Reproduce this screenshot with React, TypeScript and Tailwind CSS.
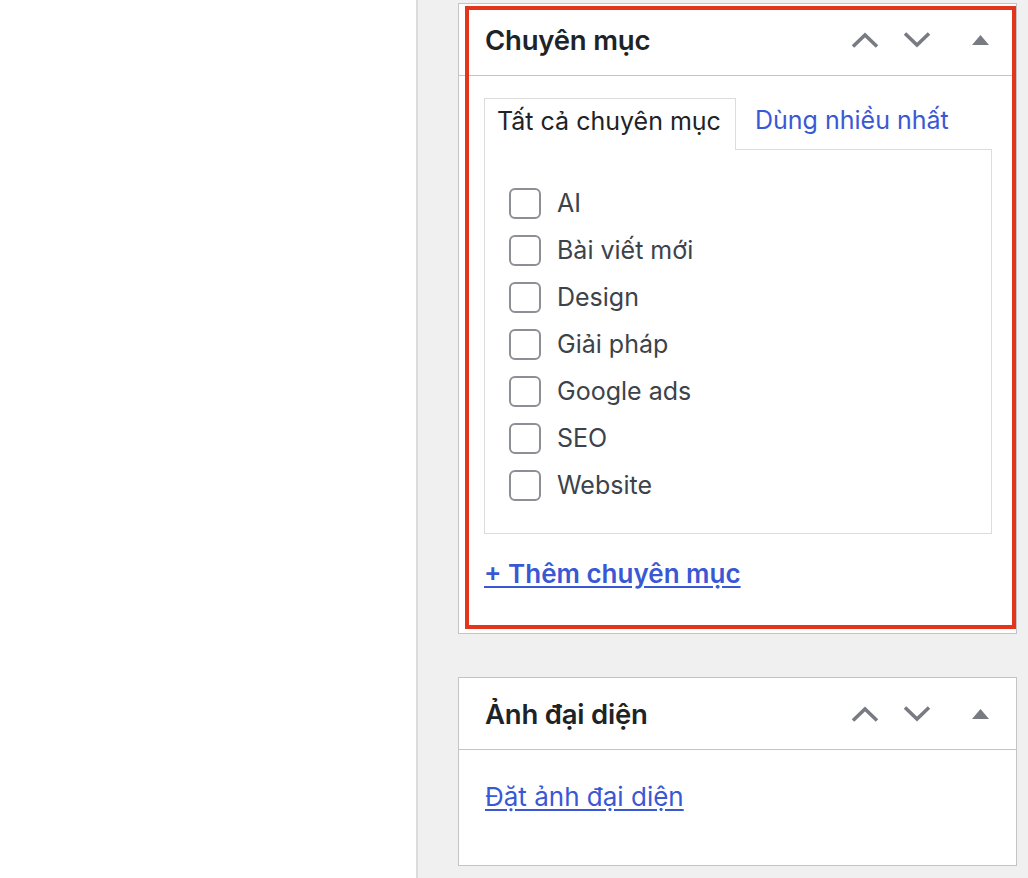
import React from "react";

const ChevUp = () => (
  <svg width="28" height="16" viewBox="0 0 28 16" fill="none">
    <path d="M2 14.5 L14 3 L26 14.5" stroke="#787c82" strokeWidth="3.6" strokeLinejoin="miter" />
  </svg>
);
const ChevDown = () => (
  <svg width="28" height="16" viewBox="0 0 28 16" fill="none">
    <path d="M2 1.5 L14 13 L26 1.5" stroke="#787c82" strokeWidth="3.6" strokeLinejoin="miter" />
  </svg>
);
const Tri = () => (
  <svg width="17" height="10" viewBox="0 0 17 10">
    <path d="M8.5 0 L17 10 L0 10 Z" fill="#787c82" />
  </svg>
);

function Header({ title }: { title: string }) {
  return (
    <div className="flex h-[72px] items-center border-b border-[#c3c4c7] pl-[26px] pr-[27px]">
      <h2 className="pt-[3px] text-[27.5px] font-semibold tracking-[-0.2px] text-[#1d2327]">{title}</h2>
      <div className="ml-auto flex items-center">
        <ChevUp />
        <div className="ml-[24px]">
          <ChevDown />
        </div>
        <div className="ml-[41px]">
          <Tri />
        </div>
      </div>
    </div>
  );
}

const cats = ["AI", "Bài viết mới", "Design", "Giải pháp", "Google ads", "SEO", "Website"];

export default function App() {
  return (
    <div
      className="flex h-[878px] w-[1028px] overflow-hidden"
      style={{ fontFamily: "Inter, 'Noto Sans', 'Liberation Sans', sans-serif" }}
    >
      <div className="w-[418px] shrink-0 border-r-2 border-[#dcdcde] bg-white" />
      <div className="flex-1 bg-[#f0f0f0] pl-[40px] pt-[3px]">
        <div className="relative w-[559px] border border-[#c3c4c7] bg-white">
          <Header title="Chuyên mục" />
          <div className="pl-[25px] pr-[24px] pt-[21px] pb-[40px]">
            <div className="flex items-end">
              <div className="relative z-10 -mb-px flex h-[52px] w-[252px] items-center border border-b-0 border-[#dcdcde] bg-white px-[12px] pb-[5px] text-[25px] text-[#1d2327]">
                Tất cả chuyên mục
              </div>
              <div className="flex h-[52px] items-center px-[19px] pb-[5px] text-[25px] text-[#3a58d4]">
                Dùng nhiều nhất
              </div>
            </div>
            <div className="flex h-[385px] flex-col border border-[#dcdcde] px-[24px] pt-[44px]">
              {cats.map((c) => (
                <label key={c} className="flex h-[47px] items-start">
                  <span className="mt-[-14px] flex h-[47px] items-center">
                    <span className="block h-[31px] w-[32px] rounded-[6px] border-2 border-[#8c8f94] bg-white" />
                  </span>
                  <span className="mt-[-14px] flex h-[47px] items-center pl-[16px] text-[25px] text-[#3c434a]">
                    {c}
                  </span>
                </label>
              ))}
            </div>
            <div className="pt-[20px]">
              <a className="text-[26px] font-semibold text-[#3a58d4] underline underline-offset-[3px]">
                + Thêm chuyên mục
              </a>
            </div>
          </div>
          <div className="pointer-events-none absolute bottom-[4px] left-[6px] right-[0px] top-[2px] border-[4px] border-[#e3341c]" />
        </div>

        <div className="mt-[43px] w-[559px] border border-[#c3c4c7] bg-white">
          <Header title="Ảnh đại diện" />
          <div className="h-[115px] pl-[26px] pt-[27px]">
            <a className="text-[26px] text-[#3a58d4] underline underline-offset-[3px]">Đặt ảnh đại diện</a>
          </div>
        </div>
      </div>
    </div>
  );
}
